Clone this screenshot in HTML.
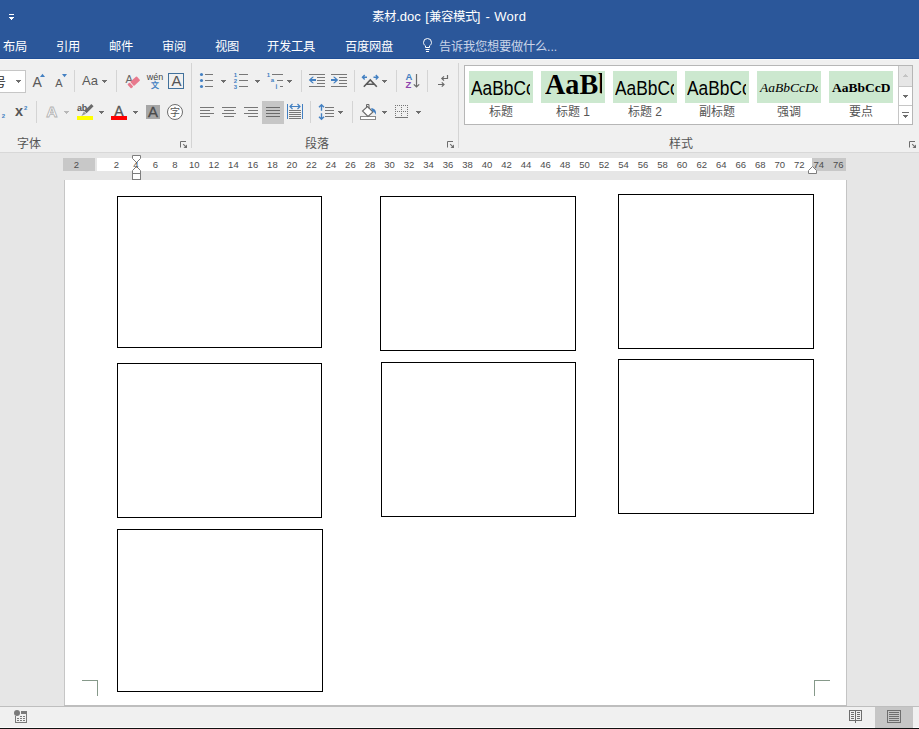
<!DOCTYPE html>
<html lang="zh-CN">
<head>
<meta charset="utf-8">
<title>素材.doc [兼容模式] - Word</title>
<style>
*{margin:0;padding:0;box-sizing:border-box;}
html,body{width:919px;height:729px;overflow:hidden;background:#e6e6e6;}
body{position:relative;font-family:"Liberation Sans",sans-serif;font-size:12px;color:#444;}
.abs{position:absolute;}
.t{position:absolute;white-space:nowrap;}
.sty{position:absolute;top:71px;width:64px;height:32px;background:#cce8cf;overflow:hidden;}
.sty i{position:absolute;left:2px;top:0;width:59px;height:32px;overflow:hidden;font-style:normal;}
.sty span{position:absolute;white-space:nowrap;color:#000;line-height:1.2;transform-origin:0 0;}
.rn{position:absolute;z-index:6;top:158px;width:20px;text-align:center;font-size:9.5px;line-height:13px;color:#4d4d4d;white-space:nowrap;}
.slab{position:absolute;top:103px;width:64px;text-align:center;font-size:12px;line-height:18px;color:#555;white-space:nowrap;}
#titlebar{position:absolute;left:0;top:0;width:919px;height:59px;background:#2b579a;border-bottom:1px solid #1f4e96;}
#title{position:absolute;left:0;top:8px;width:919px;height:18px;color:#fff;font-size:13px;line-height:18px;white-space:nowrap;}
#title span{position:absolute;top:0;white-space:nowrap;}
#title b{font-weight:normal;font-size:12.4px;}
.tab{position:absolute;top:38px;color:#fff;font-size:12.25px;line-height:18px;white-space:nowrap;}
#tell{color:#c9d4e8;}
#ribbon{position:absolute;left:0;top:59px;width:919px;height:93px;background:#f0f0f0;border-top:1px solid #f8f8f8;}
#ribbonline{position:absolute;left:0;top:152px;width:919px;height:1px;background:#d8d8d8;}
.glabel{position:absolute;top:135px;font-size:12px;line-height:18px;color:#555;white-space:nowrap;}
#page{position:absolute;left:65px;top:180px;width:781px;height:525px;background:#fff;}
#pageL{position:absolute;left:64px;top:180px;width:1px;height:525px;background:#c6c6c6;}
#pageR{position:absolute;left:846px;top:180px;width:1px;height:525px;background:#c4c4c4;}
.box{position:absolute;border:1px solid #000;background:#fff;}
#botline{position:absolute;left:0;top:706px;width:919px;height:1px;background:#bebebe;}
#botline2{position:absolute;left:64px;top:705px;width:783px;height:1px;background:#bebebe;}
#status{position:absolute;left:0;top:707px;width:919px;height:20px;background:#f0f0f0;}
#botw{position:absolute;left:0;top:727px;width:919px;height:1px;background:#fafafa;}
#botk{position:absolute;left:0;top:728px;width:919px;height:1px;background:#111;}
</style>
</head>
<body>
<div id="titlebar"></div>
<div id="title"><span style="left:372.2px"><b>素材</b>.doc</span><span style="left:425.2px">[<b>兼容模式</b>]</span><span style="left:485.5px;letter-spacing:0.35px">- Word</span></div>
<div class="tab" style="left:3px">布局</div>
<div class="tab" style="left:56px">引用</div>
<div class="tab" style="left:109px">邮件</div>
<div class="tab" style="left:162px">审阅</div>
<div class="tab" style="left:215px">视图</div>
<div class="tab" style="left:267px">开发工具</div>
<div class="tab" style="left:345px">百度网盘</div>
<div class="tab" id="tell" style="left:439px">告诉我您想要做什么...</div>
<div id="ribbon"></div>
<div id="ribbonline"></div>
<div class="glabel" style="left:17px">字体</div>
<div class="glabel" style="left:305px">段落</div>
<div class="glabel" style="left:669px">样式</div>

<!-- ===== FONT GROUP ===== -->
<div class="abs" style="left:-1px;top:70px;width:27px;height:23px;background:#fff;border:1px solid #c6c6c6;overflow:hidden;">
  <div class="abs" style="left:-6px;top:2.5px;font-size:12px;line-height:18px;color:#2a2a2a;">号</div>
</div>
<div class="t" style="left:32.5px;top:72px;font-size:14px;line-height:20px;color:#595959;">A</div>
<div class="t" style="left:55.3px;top:74.3px;font-size:11px;line-height:18px;color:#595959;">A</div>
<div class="t" style="left:82px;top:71px;font-size:13px;line-height:20px;color:#595959;">Aa</div>
<div class="t" style="left:125.5px;top:70.5px;font-size:11px;line-height:16px;color:#666;">A</div>
<div class="t" style="left:146.8px;top:71px;font-size:9px;line-height:12px;color:#444;">wén</div>
<div class="t" style="left:150.8px;top:80px;font-size:8px;line-height:12px;color:#4380c2;font-weight:bold;">文</div>
<div class="abs" style="left:168px;top:73px;width:16px;height:16px;border:1px solid #41719c;"></div>
<div class="t" style="left:171.5px;top:71px;font-size:15px;line-height:20px;color:#555;">A</div>
<div class="t" style="left:1.8px;top:112.2px;font-size:6px;line-height:8px;color:#4380c2;font-weight:bold;">2</div>
<div class="t" style="left:14.9px;top:100.1px;font-size:14.5px;line-height:22px;color:#555;font-weight:bold;">x</div>
<div class="t" style="left:23.9px;top:104.2px;font-size:6px;line-height:8px;color:#4380c2;font-weight:bold;">2</div>
<div class="t" style="left:77px;top:100.6px;font-size:9px;line-height:14px;color:#555;font-weight:bold;letter-spacing:-0.3px;">ab</div>
<div class="abs" style="left:77px;top:116px;width:16px;height:4px;background:#ffff00;"></div>
<div class="t" style="left:114.3px;top:101.2px;font-size:14px;line-height:20px;color:#555;-webkit-text-stroke:0.3px #555;">A</div>
<div class="abs" style="left:111px;top:116px;width:16px;height:4px;background:#ff0000;"></div>
<div class="abs" style="left:146px;top:105px;width:14px;height:14px;background:#a6a6a6;"></div>
<div class="t" style="left:148.1px;top:101.7px;font-size:15px;line-height:20px;color:#4a4a4a;-webkit-text-stroke:0.3px #4a4a4a;">A</div>
<div class="abs" style="left:167px;top:104px;width:16px;height:16px;border:1px solid #6e6e6e;border-radius:50%;background:#fff;"></div>
<div class="t" style="left:170px;top:106.3px;font-size:10px;line-height:14px;color:#555;">字</div>

<div class="t" style="left:233.7px;top:71.2px;font-size:6px;line-height:8px;color:#4380c2;font-weight:bold;">1</div>
<div class="t" style="left:233.7px;top:77.2px;font-size:6px;line-height:8px;color:#4380c2;font-weight:bold;">2</div>
<div class="t" style="left:233.7px;top:83.2px;font-size:6px;line-height:8px;color:#4380c2;font-weight:bold;">3</div>
<div class="t" style="left:266.7px;top:70.7px;font-size:6px;line-height:8px;color:#4380c2;font-weight:bold;">1</div>
<div class="t" style="left:270.8px;top:76.3px;font-size:6px;line-height:8px;color:#4380c2;font-weight:bold;">a</div>
<div class="t" style="left:275.6px;top:82.7px;font-size:6.5px;line-height:8px;color:#4380c2;font-weight:bold;">i</div>
<div class="t" style="left:405.5px;top:71.5px;font-size:9.5px;line-height:10px;color:#4380c2;font-weight:bold;">A</div>
<div class="t" style="left:405.5px;top:79.5px;font-size:9.5px;line-height:10px;color:#8e44ad;font-weight:bold;">Z</div>

<!-- ===== STYLES GALLERY ===== -->
<div class="abs" style="left:464px;top:65px;width:449px;height:60px;background:#fff;border:1px solid #b6b6b6;"></div>
<div class="abs" style="left:899px;top:66px;width:13px;height:20px;background:#e6e6e6;"></div>
<div class="abs" style="left:898px;top:66px;width:1px;height:58px;background:#c6c6c6;"></div>
<div class="abs" style="left:899px;top:86px;width:13px;height:1px;background:#c6c6c6;"></div>
<div class="abs" style="left:899px;top:105px;width:13px;height:1px;background:#c6c6c6;"></div>
<div class="sty" style="left:469px;"><i><span style="font-size:20.5px;left:0.3px;top:4.5px;transform:scaleX(0.845);">AaBbCc</span></i></div>
<div class="sty" style="left:541px;"><i><span style="font-family:'Liberation Serif',serif;font-weight:bold;font-size:29px;left:1.5px;top:-4.5px;transform:scaleX(0.97);">AaBb</span></i></div>
<div class="sty" style="left:613px;"><i><span style="font-size:20.5px;left:0.3px;top:4.5px;transform:scaleX(0.845);">AaBbCc</span></i></div>
<div class="sty" style="left:685px;"><i><span style="font-size:20.5px;left:0.3px;top:4.5px;transform:scaleX(0.845);">AaBbCc</span></i></div>
<div class="sty" style="left:757px;"><i><span style="font-family:'Liberation Serif',serif;font-style:italic;font-size:13.5px;left:1px;top:9px;">AaBbCcDd</span></i></div>
<div class="sty" style="left:829px;"><i><span style="font-family:'Liberation Serif',serif;font-weight:bold;font-size:13.5px;left:1px;top:9px;">AaBbCcD</span></i></div>
<div class="slab" style="left:469px;">标题</div>
<div class="slab" style="left:541px;">标题 1</div>
<div class="slab" style="left:613px;">标题 2</div>
<div class="slab" style="left:685px;">副标题</div>
<div class="slab" style="left:757px;">强调</div>
<div class="slab" style="left:829px;">要点</div>
<!-- ===== RULER ===== -->
<div class="abs" style="left:63px;top:158px;width:32px;height:13px;background:#c8c8c8;"></div>
<div class="abs" style="left:97px;top:158px;width:715px;height:13px;background:#fff;"></div>
<div class="abs" style="left:812px;top:158px;width:34px;height:13px;background:#c8c8c8;"></div>
<div class="rn" style="left:66.3px">2</div>
<div class="rn" style="left:106.3px">2</div>
<div class="rn" style="left:125.8px">4</div>
<div class="rn" style="left:145.3px">6</div>
<div class="rn" style="left:164.8px">8</div>
<div class="rn" style="left:184.3px">10</div>
<div class="rn" style="left:203.9px">12</div>
<div class="rn" style="left:223.4px">14</div>
<div class="rn" style="left:242.9px">16</div>
<div class="rn" style="left:262.4px">18</div>
<div class="rn" style="left:281.9px">20</div>
<div class="rn" style="left:301.4px">22</div>
<div class="rn" style="left:320.9px">24</div>
<div class="rn" style="left:340.4px">26</div>
<div class="rn" style="left:360.0px">28</div>
<div class="rn" style="left:379.5px">30</div>
<div class="rn" style="left:399.0px">32</div>
<div class="rn" style="left:418.5px">34</div>
<div class="rn" style="left:438.0px">36</div>
<div class="rn" style="left:457.5px">38</div>
<div class="rn" style="left:477.0px">40</div>
<div class="rn" style="left:496.5px">42</div>
<div class="rn" style="left:516.1px">44</div>
<div class="rn" style="left:535.6px">46</div>
<div class="rn" style="left:555.1px">48</div>
<div class="rn" style="left:574.6px">50</div>
<div class="rn" style="left:594.1px">52</div>
<div class="rn" style="left:613.6px">54</div>
<div class="rn" style="left:633.1px">56</div>
<div class="rn" style="left:652.6px">58</div>
<div class="rn" style="left:672.1px">60</div>
<div class="rn" style="left:691.7px">62</div>
<div class="rn" style="left:711.2px">64</div>
<div class="rn" style="left:730.7px">66</div>
<div class="rn" style="left:750.2px">68</div>
<div class="rn" style="left:769.7px">70</div>
<div class="rn" style="left:789.2px">72</div>
<div class="rn" style="left:808.7px">74</div>
<div class="rn" style="left:828.2px">76</div>
<!-- ===== ICON SVG OVERLAY ===== -->
<svg class="abs" style="left:0;top:0;z-index:5" width="919" height="729" viewBox="0 0 919 729">
<g id="qat" fill="#fff" shape-rendering="crispEdges"><rect x="9" y="14" width="5" height="1"/><path d="M9 17h5v1h-1v1h-1v1h-1v-1h-1v-1h-1z"/></g>
<g id="bulb" fill="none" stroke="#fff" stroke-width="1"><path d="M425.5 47.5v-1.6c-1.3-.9-2-2.100-2-3.400a4 4 0 0 1 8 0c0 1.300-.7 2.500-2 3.400v1.600z"/><path d="M425.500 49.500h4M426 51.500h3"/></g>
<!-- dropdown arrows -->
<g fill="#6e6e6e" shape-rendering="crispEdges">
<path d="M16 80h5v1h-1v1h-1v1h-1v-1h-1v-1h-1z"/><path d="M102 80h5v1h-1v1h-1v1h-1v-1h-1v-1h-1z"/>
<path d="M99 111h5v1h-1v1h-1v1h-1v-1h-1v-1h-1z"/><path d="M133 111h5v1h-1v1h-1v1h-1v-1h-1v-1h-1z"/>
<path d="M221 80h5v1h-1v1h-1v1h-1v-1h-1v-1h-1z"/><path d="M255 80h5v1h-1v1h-1v1h-1v-1h-1v-1h-1z"/><path d="M287 80h5v1h-1v1h-1v1h-1v-1h-1v-1h-1z"/>
<path d="M382 80h5v1h-1v1h-1v1h-1v-1h-1v-1h-1z"/><path d="M338 111h5v1h-1v1h-1v1h-1v-1h-1v-1h-1z"/><path d="M382 111h5v1h-1v1h-1v1h-1v-1h-1v-1h-1z"/><path d="M416 111h5v1h-1v1h-1v1h-1v-1h-1v-1h-1z"/>
</g>
<path d="M64 111h5v1h-1v1h-1v1h-1v-1h-1v-1h-1z" fill="#b8b8b8"/>
<!-- grow/shrink triangles -->
<path d="M40 77l2.500-3.200l2.500 3.200z" fill="#4380c2"/>
<path d="M62 74h5l-2.500 3.200z" fill="#4380c2"/>
<!-- separators -->
<g fill="#d4d4d4" shape-rendering="crispEdges">
<rect x="74" y="70" width="1" height="22"/><rect x="116" y="70" width="1" height="22"/><rect x="36" y="101" width="1" height="22"/>
<rect x="301" y="70" width="1" height="22"/><rect x="354" y="70" width="1" height="22"/><rect x="396" y="70" width="1" height="22"/><rect x="427" y="70" width="1" height="22"/>
<rect x="310" y="101" width="1" height="22"/><rect x="352" y="101" width="1" height="22"/>
<rect x="191" y="63" width="1" height="85"/><rect x="458" y="63" width="1" height="85"/>
</g>
<!-- eraser -->
<g transform="translate(133.8,82.4) rotate(-42)" fill="#e8798d"><rect x="-2.300" y="-2.800" width="8.500" height="5.600" rx="0.800"/><rect x="-6.200" y="-2.800" width="3" height="5.600" rx="0.800"/></g>
<!-- text effects A -->
<text x="46.300" y="116.600" font-family="Liberation Sans, sans-serif" font-size="15.5" font-weight="bold" fill="#fff" stroke="#b4b4b4" stroke-width="0.900">A</text>
<!-- highlighter pen -->
<g transform="translate(87.5,110) rotate(-45)"><rect x="-3" y="-1.600" width="10" height="3.200" fill="#6a6a6a"/><path d="M-3.600 -1.600l-5 1.600l5 1.600z" fill="#9a9a9a"/></g>

<!-- ===== PARAGRAPH GROUP ===== -->
<g shape-rendering="crispEdges">
<!-- bullets -->
<g fill="#777"><rect x="205" y="74" width="8" height="1"/><rect x="205" y="80" width="8" height="1"/><rect x="205" y="86" width="8" height="1"/></g>
<!-- numbering lines -->
<g fill="#777"><rect x="239" y="74" width="9" height="1"/><rect x="239" y="80" width="9" height="1"/><rect x="239" y="86" width="9" height="1"/></g>
<!-- multilevel lines -->
<g fill="#777"><rect x="272" y="74" width="11" height="1"/><rect x="277" y="80" width="6" height="1"/><rect x="280" y="86" width="3" height="1"/></g>
<!-- decrease indent -->
<g fill="#777"><rect x="309" y="74" width="16" height="1"/><rect x="317" y="77" width="8" height="1"/><rect x="317" y="80" width="8" height="1"/><rect x="317" y="83" width="8" height="1"/><rect x="309" y="86" width="16" height="1"/></g>
<!-- increase indent -->
<g fill="#777"><rect x="331" y="74" width="16" height="1"/><rect x="339" y="77" width="8" height="1"/><rect x="339" y="80" width="8" height="1"/><rect x="339" y="83" width="8" height="1"/><rect x="331" y="86" width="16" height="1"/></g>
<!-- justify selected bg -->
<rect x="262" y="101" width="22" height="23" fill="#c6c6c6"/>
<!-- align left -->
<g fill="#777"><rect x="200" y="107" width="14" height="1"/><rect x="200" y="110" width="10" height="1"/><rect x="200" y="113" width="14" height="1"/><rect x="200" y="116" width="10" height="1"/></g>
<!-- align center -->
<g fill="#777"><rect x="222" y="107" width="14" height="1"/><rect x="224" y="110" width="10" height="1"/><rect x="222" y="113" width="14" height="1"/><rect x="224" y="116" width="10" height="1"/></g>
<!-- align right -->
<g fill="#777"><rect x="244" y="107" width="14" height="1"/><rect x="248" y="110" width="10" height="1"/><rect x="244" y="113" width="14" height="1"/><rect x="248" y="116" width="10" height="1"/></g>
<!-- justify -->
<g fill="#6a6a6a"><rect x="266" y="107" width="14" height="1"/><rect x="266" y="110" width="14" height="1"/><rect x="266" y="113" width="14" height="1"/><rect x="266" y="116" width="14" height="1"/></g>
<!-- distributed -->
<g fill="#4380c2"><rect x="287" y="104" width="1" height="15"/><rect x="302" y="104" width="1" height="15"/></g>
<g fill="#777"><rect x="289" y="110" width="12" height="1"/><rect x="289" y="112" width="12" height="1"/><rect x="289" y="114" width="12" height="1"/><rect x="289" y="116" width="12" height="1"/><rect x="289" y="118" width="12" height="1"/></g>
<!-- line spacing lines -->
<g fill="#777"><rect x="325" y="107" width="9" height="1"/><rect x="325" y="110" width="9" height="1"/><rect x="325" y="113" width="9" height="1"/><rect x="325" y="116" width="9" height="1"/></g>
<!-- shading bar -->
<rect x="360.500" y="116.500" width="15" height="3" fill="#fff" stroke="#8a8a8a" stroke-width="1"/>
<!-- borders icon -->
<g fill="#777"><rect x="395" y="117" width="13" height="1"/></g>
</g>
<!-- borders dotted -->
<g stroke="#777" stroke-width="1" stroke-dasharray="1 1" fill="none" shape-rendering="crispEdges">
<path d="M395 105.500h13M395 111.500h13M395.500 105v12M401.500 105v12M407.500 105v12"/>
</g>
<!-- bullets dots -->
<g fill="#4380c2"><circle cx="201.500" cy="74.500" r="1.550"/><circle cx="201.500" cy="80.500" r="1.550"/><circle cx="201.500" cy="86.500" r="1.550"/></g>
<!-- indent arrows -->
<g fill="#4380c2"><path d="M308.800 80L312.300 76.700L314 76.700L311.700 79L316 79L316 81L311.700 81L314 83.300L312.300 83.300Z"/><path d="M338.200 80L334.700 76.700L333 76.700L335.300 79L331 79L331 81L335.300 81L333 83.300L334.700 83.300Z"/></g>
<!-- distributed arrow -->
<g fill="none" stroke="#4380c2" stroke-width="1.200"><path d="M290 106.500h10M292.500 104l-2.500 2.500l2.500 2.500M297.500 104l2.500 2.500l-2.500 2.500"/></g>
<!-- line spacing arrow -->
<g fill="none" stroke="#4380c2" stroke-width="1.400"><path d="M321.500 104.800v6M319 107.300l2.500-2.500l2.500 2.500M321.500 113.200v6M319 116.700l2.500 2.500l2.500-2.500"/></g>
<!-- asian layout -->
<g fill="none" stroke="#4380c2" stroke-width="1.400"><path d="M362.500 77.200h4.500M364.700 75l-2.200 2.200l2.200 2.200M373.500 77.200h4.500M375.800 75l2.200 2.200l-2.200 2.200"/></g>
<path d="M363.800 86.700l6.500-6.700l6.500 6.700M366.300 84.200h8" fill="none" stroke="#5a5a5a" stroke-width="1.600"/>
<!-- sort arrow -->
<g fill="none" stroke="#6a6a6a" stroke-width="1.200"><path d="M416.500 74v13M413.800 84.300l2.700 2.700l2.700-2.700"/></g>
<!-- show/hide marks -->
<g fill="none" stroke="#6a6a6a" stroke-width="1.200"><path d="M447.500 75v3.500h-5.500M444 76.300l-2.200 2.200l2.200 2.200M438 84.500h6M441.800 82.300l2.200 2.200l-2.200 2.200"/></g>
<!-- paint bucket -->
<g><path d="M367.500 106.500l5.500 5.500l-5 4.500l-5.500-5.500z" fill="#fff" stroke="#6a6a6a" stroke-width="1.100"/><path d="M366.500 108v-3.500h2.500v4" fill="none" stroke="#6a6a6a" stroke-width="1"/><path d="M371 108.300C374.500 108.200 376.700 110.500 375.900 115C375.200 112.700 374 111.700 372.300 111.200z" fill="#4380c2"/></g>

<!-- gallery arrows -->
<g shape-rendering="crispEdges"><path d="M903 77h5v-1h-1v-1h-1v-1h-1v1h-1v1h-1z" fill="#c4c4c4"/>
<path d="M903 95h5v1h-1v1h-1v1h-1v-1h-1v-1h-1z" fill="#6e6e6e"/>
<rect x="902" y="112" width="7" height="1" fill="#6e6e6e"/><path d="M903 115h5v1h-1v1h-1v1h-1v-1h-1v-1h-1z" fill="#6e6e6e"/></g>

<!-- ruler markers -->
<g fill="#fff" stroke="#7d7d7d" stroke-width="1">
<path d="M132.500 155.500h8v3l-4 4l-4-4z"/>
<path d="M136.500 166.500l4 4v3h-8v-3z"/>
<rect x="132.500" y="173.500" width="8" height="6"/>
<path d="M812.500 166.500l4 4v3h-8v-3z"/>
</g>
<!-- crop marks -->
<g fill="#86998a" shape-rendering="crispEdges">
<rect x="82" y="680" width="16" height="1"/><rect x="97" y="680" width="1" height="16"/>
<rect x="814" y="680" width="16" height="1"/><rect x="814" y="680" width="1" height="16"/>
</g>
<!-- status bar -->
<rect x="875" y="707" width="38" height="21" fill="#c6c6c6" shape-rendering="crispEdges"/>
<g id="macro" fill="#7a7a7a" shape-rendering="crispEdges">
<rect x="15" y="716" width="1" height="7"/><rect x="15" y="722" width="12" height="1"/><rect x="26" y="711" width="1" height="12"/><rect x="21" y="711" width="6" height="3"/>
<rect x="20" y="716" width="2" height="1"/><rect x="23" y="716" width="2" height="1"/>
<rect x="17" y="718" width="2" height="1"/><rect x="20" y="718" width="2" height="1"/><rect x="23" y="718" width="2" height="1"/>
<rect x="17" y="720" width="2" height="1"/><rect x="20" y="720" width="2" height="1"/><rect x="23" y="720" width="2" height="1"/>
</g>
<circle cx="17" cy="713" r="3" fill="#7a7a7a"/>
<g id="readmode" fill="#6e6e6e" shape-rendering="crispEdges">
<rect x="849" y="710" width="13" height="1"/><rect x="849" y="710" width="1" height="11"/><rect x="861" y="710" width="1" height="11"/><rect x="849" y="720" width="13" height="1"/>
<rect x="855" y="710" width="1" height="13"/>
<rect x="851" y="712" width="3" height="1"/><rect x="851" y="714" width="3" height="1"/><rect x="851" y="716" width="3" height="1"/><rect x="851" y="718" width="3" height="1"/>
<rect x="857" y="712" width="3" height="1"/><rect x="857" y="714" width="3" height="1"/><rect x="857" y="716" width="3" height="1"/><rect x="857" y="718" width="3" height="1"/>
</g>
<g id="printlayout" fill="#6e6e6e" shape-rendering="crispEdges">
<rect x="887" y="710" width="14" height="1"/><rect x="887" y="722" width="14" height="1"/><rect x="887" y="710" width="1" height="13"/><rect x="900" y="710" width="1" height="13"/>
<rect x="889" y="712" width="10" height="1"/><rect x="889" y="714" width="10" height="1"/><rect x="889" y="716" width="10" height="1"/><rect x="889" y="718" width="10" height="1"/><rect x="889" y="720" width="10" height="1"/>
</g>
<!-- dialog launchers -->
<path d="M180.5 147.5v-6h5.500" fill="none" stroke="#6e6e6e" stroke-width="1"/><path d="M183.2 144.2l3 3" fill="none" stroke="#6e6e6e" stroke-width="1.100"/><path d="M187 144.5v3.500h-3.500z" fill="#6e6e6e"/>
<path d="M447.5 147.5v-6h5.500" fill="none" stroke="#6e6e6e" stroke-width="1"/><path d="M450.2 144.2l3 3" fill="none" stroke="#6e6e6e" stroke-width="1.100"/><path d="M454 144.5v3.500h-3.500z" fill="#6e6e6e"/>
<path d="M909.5 147.5v-6h5.500" fill="none" stroke="#6e6e6e" stroke-width="1"/><path d="M912.2 144.2l3 3" fill="none" stroke="#6e6e6e" stroke-width="1.100"/><path d="M916 144.5v3.500h-3.500z" fill="#6e6e6e"/>
</svg>
<div id="page"></div><div id="pageL"></div><div id="pageR"></div>
<div class="box" style="left:117px;top:196px;width:205px;height:152px"></div>
<div class="box" style="left:380px;top:196px;width:196px;height:155px"></div>
<div class="box" style="left:618px;top:194px;width:196px;height:155px"></div>
<div class="box" style="left:117px;top:363px;width:205px;height:155px"></div>
<div class="box" style="left:381px;top:362px;width:195px;height:155px"></div>
<div class="box" style="left:618px;top:359px;width:196px;height:155px"></div>
<div class="box" style="left:117px;top:529px;width:206px;height:163px"></div>
<div id="botline"></div><div id="botline2"></div>
<div id="status"></div>
<div id="botw"></div><div id="botk"></div>
</body>
</html>
